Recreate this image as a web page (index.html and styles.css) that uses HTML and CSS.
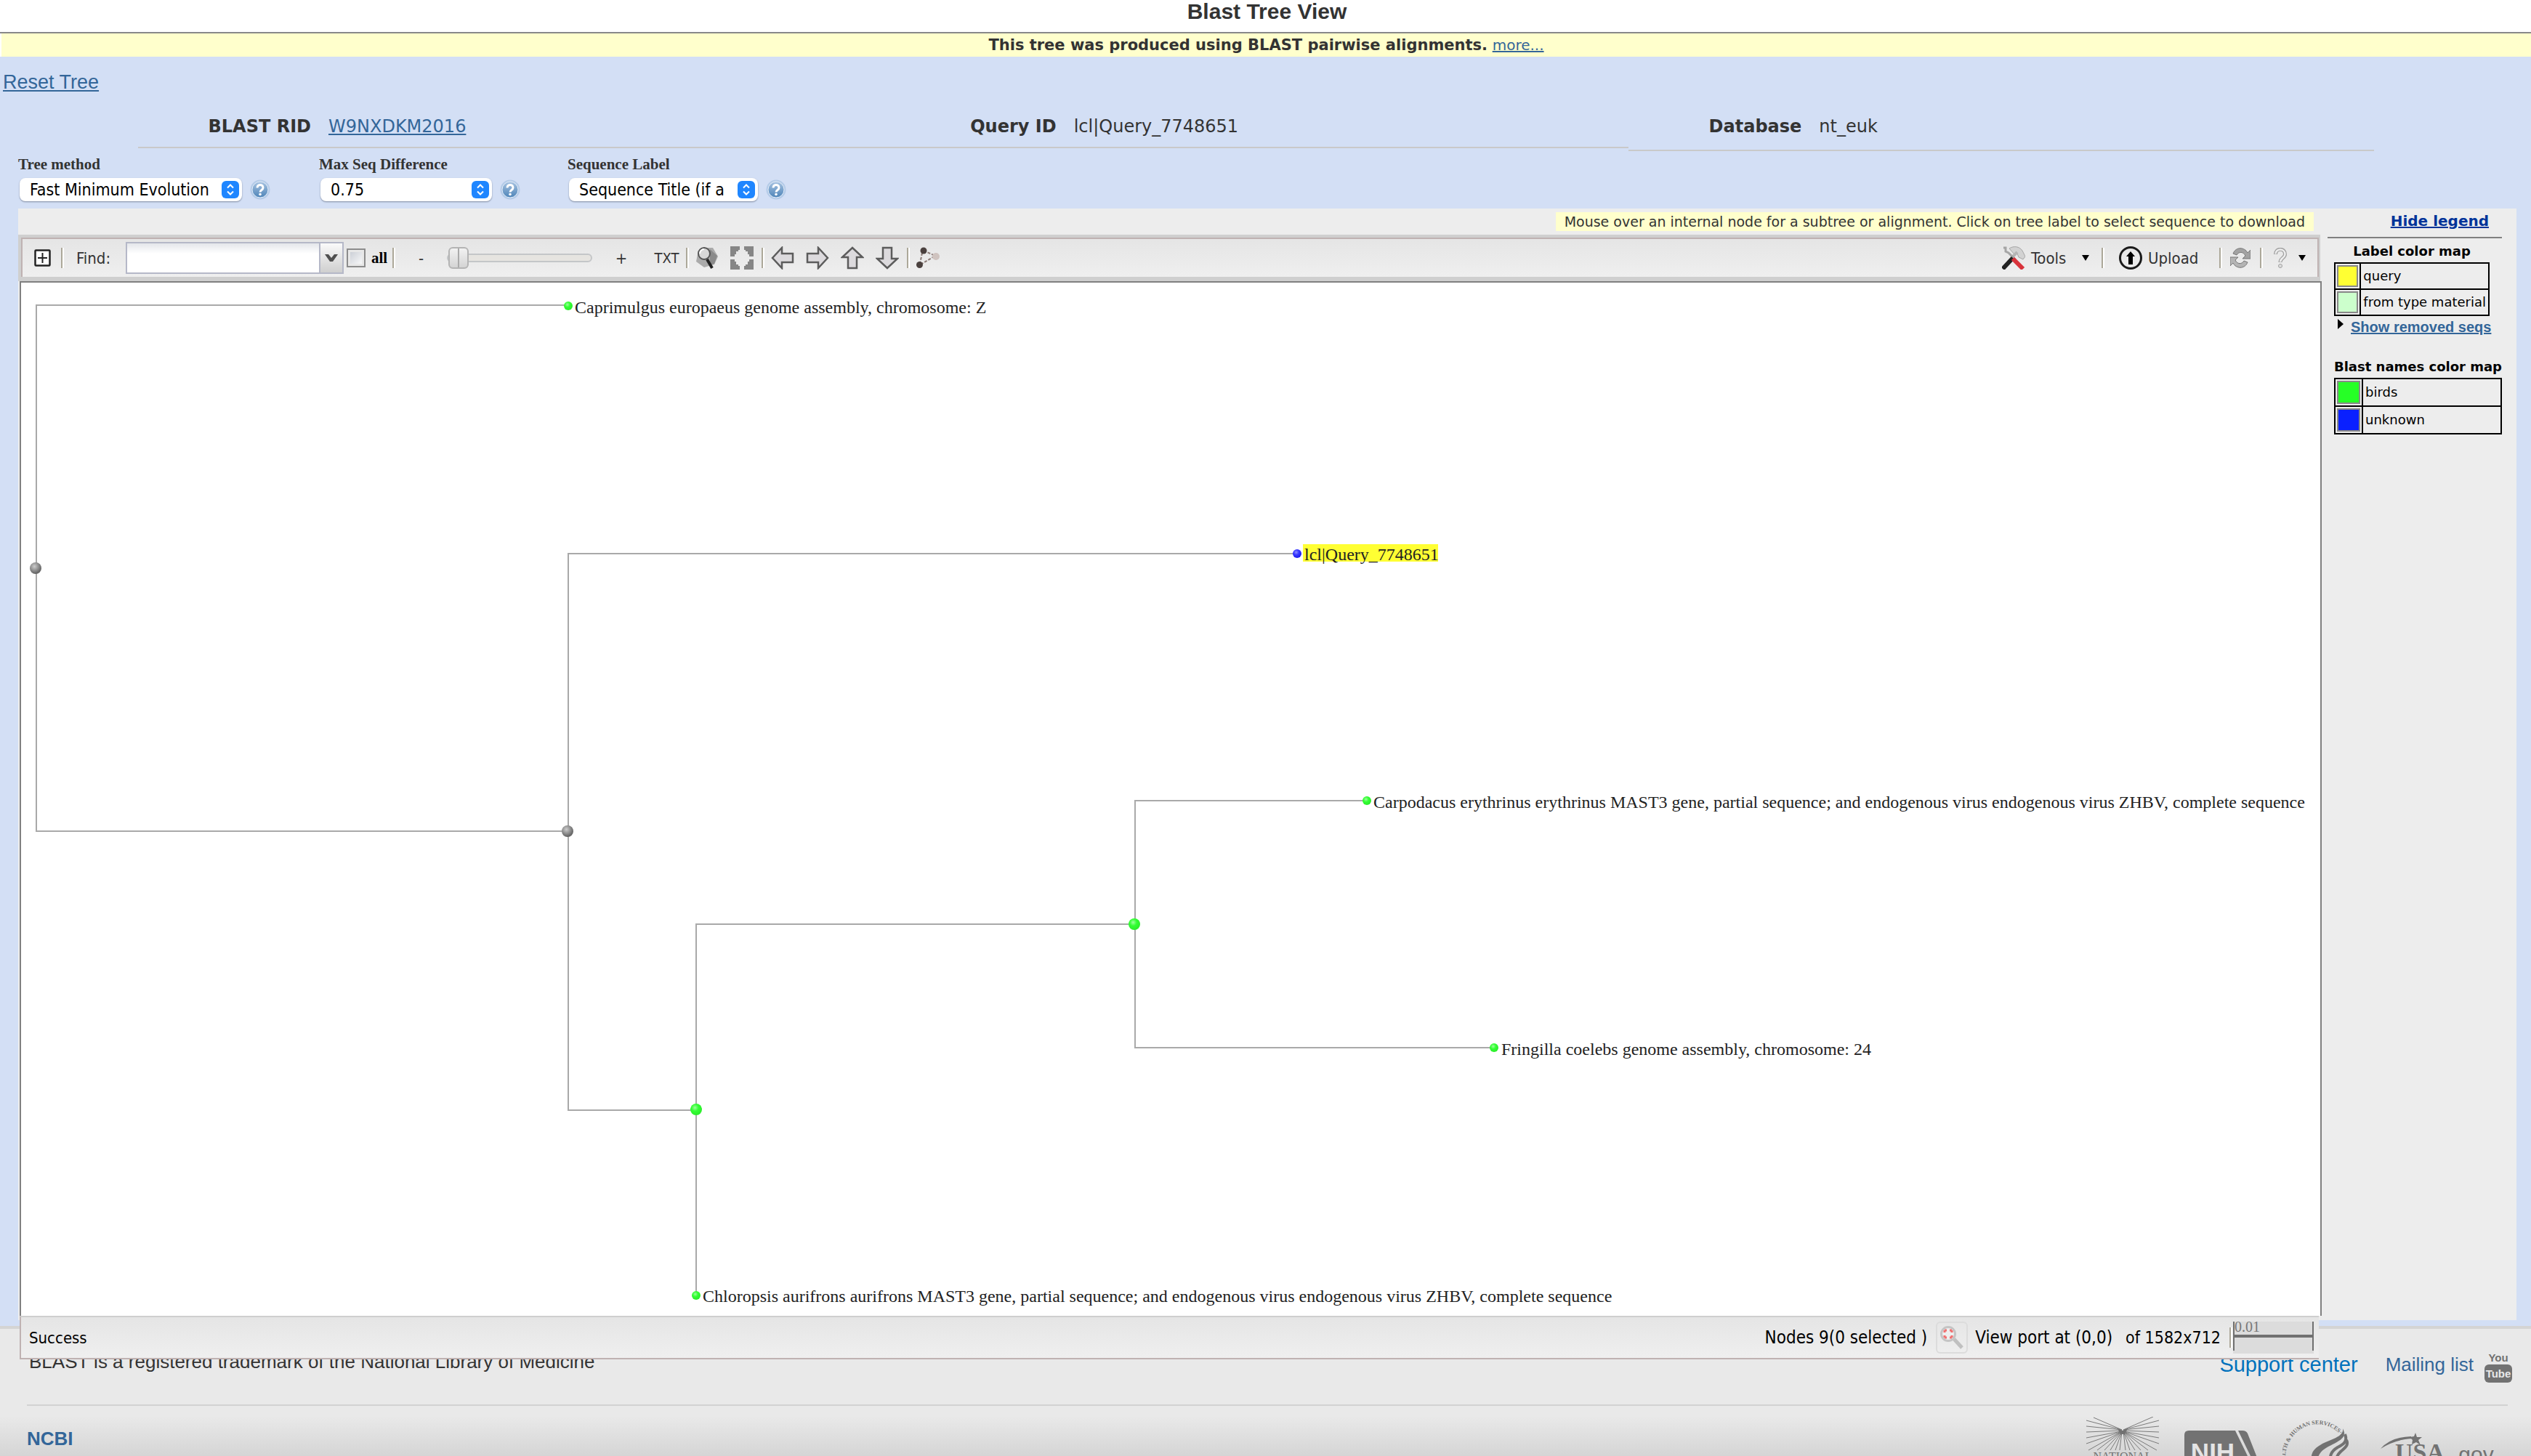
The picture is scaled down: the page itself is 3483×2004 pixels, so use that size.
FILE: index.html
```html
<!DOCTYPE html>
<html lang="en">
<head>
<meta charset="utf-8">
<title>Blast Tree View</title>
<link rel="stylesheet" href="styles.css">
</head>
<body>
<header class="title-bar"><h1>Blast Tree View</h1></header>
<p class="notice"><strong>This tree was produced using BLAST pairwise alignments.</strong> <a href="#more">more...</a></p>

<main class="viewer">
  <a class="reset" href="#reset">Reset Tree</a>

  <dl class="params">
    <div class="param"><dt>BLAST RID</dt><dd><a href="#rid">W9NXDKM2016</a></dd></div>
    <div class="param"><dt>Query ID</dt><dd>lcl|Query_7748651</dd></div>
    <div class="param param-last"><dt>Database</dt><dd>nt_euk</dd></div>
  </dl>

  <form class="controls">
    <div class="control control-method">
      <label for="method">Tree method</label>
      <div class="control-row">
        <span class="picker"><select id="method"><option>Fast Minimum Evolution</option><option>Neighbor Joining</option></select>
          <svg class="picker-arrows" viewBox="0 0 24 24"><rect width="24" height="24" rx="6"/><path d="M8 9.500l4-4 4 4M8 14.500l4 4 4-4"/></svg></span>
        <button type="button" class="help" aria-label="Help"><svg viewBox="0 0 28 28"><use href="#i-help"/></svg></button>
      </div>
    </div>
    <div class="control control-diff">
      <label for="diff">Max Seq Difference</label>
      <div class="control-row">
        <span class="picker"><select id="diff"><option>0.75</option><option>0.85</option></select>
          <svg class="picker-arrows" viewBox="0 0 24 24"><rect width="24" height="24" rx="6"/><path d="M8 9.500l4-4 4 4M8 14.500l4 4 4-4"/></svg></span>
        <button type="button" class="help" aria-label="Help"><svg viewBox="0 0 28 28"><use href="#i-help"/></svg></button>
      </div>
    </div>
    <div class="control control-label">
      <label for="seqlabel">Sequence Label</label>
      <div class="control-row">
        <span class="picker"><select id="seqlabel"><option>Sequence Title (if a</option><option>Taxonomic Name</option></select>
          <svg class="picker-arrows" viewBox="0 0 24 24"><rect width="24" height="24" rx="6"/><path d="M8 9.500l4-4 4 4M8 14.500l4 4 4-4"/></svg></span>
        <button type="button" class="help" aria-label="Help"><svg viewBox="0 0 28 28"><use href="#i-help"/></svg></button>
      </div>
    </div>
  </form>

  <div class="panel">
    <section class="workspace">
      <div class="hint-row"><p class="hint">Mouse over an internal node for a subtree or alignment. Click on tree label to select sequence to download</p></div>

      <div class="toolbar-frame">
      <div class="toolbar">
        <button type="button" class="tool-expand" aria-label="Expand"><svg width="24" height="24" viewBox="0 0 24 24"><rect x="1.500" y="1.500" width="20" height="21" rx="1" fill="#fff" stroke="#222" stroke-width="2.500"/><path d="M11.500 5v14M5 12h13" stroke="#222" stroke-width="2"/></svg></button>
        <span class="sep"></span>
        <label class="find-label" for="find">Find:</label>
        <input class="find" id="find" type="text">
        <button type="button" class="find-trigger" aria-label="Show matches"><svg width="18" height="14" viewBox="0 0 18 14"><path d="M0 2h5l4 5 4-5h5l-7 10h-4z" fill="#505050"/></svg></button>
        <input class="all-box" id="all" type="checkbox">
        <label class="all-label" for="all">all</label>
        <span class="sep"></span>
        <button type="button" class="zoom-out">-</button>
        <input class="zoom" type="range" min="0" max="100" value="0" aria-label="Zoom">
        <button type="button" class="zoom-in">+</button>
        <button type="button" class="txt">TXT</button>
        <span class="sep"></span>
        <div class="group">
          <button type="button" aria-label="Zoom to selection"><svg class="icon" viewBox="0 0 32 32"><path d="M8 2h16l7 12-5 11-14 4L1 21l2-10z" fill="#aaa"/><path d="M20 4l10 9-4 11-6 2z" fill="#8a8a8a"/><circle cx="12" cy="10" r="8" fill="#d8d8d8" stroke="#555" stroke-width="2"/><path d="M6 10a6 6 0 0 1 6-6" stroke="#fff" stroke-width="2" fill="none"/><path d="M16 18l7 12" stroke="#222" stroke-width="4"/></svg></button>
          <button type="button" aria-label="Fit to view"><svg class="icon" viewBox="0 0 32 32"><path d="M0 0h13v5h-2v2H8v4H6v3H0zM19 0h13v14h-6v-3h-2V7h-3V5h-2zM0 18h6v3h2v4h3v2h2v5H0zM32 18v14H19v-5h2v-2h3v-4h2v-3z" fill="#868686"/></svg></button>
        </div>
        <span class="sep"></span>
        <div class="group">
          <button type="button" aria-label="Pan left"><svg class="icon" viewBox="0 0 32 32"><use href="#i-arrow"/></svg></button>
          <button type="button" aria-label="Pan right"><svg class="icon" viewBox="0 0 32 32"><use href="#i-arrow" transform="rotate(180 16 16)"/></svg></button>
          <button type="button" aria-label="Pan up"><svg class="icon" viewBox="0 0 32 32"><use href="#i-arrow" transform="rotate(90 16 16)"/></svg></button>
          <button type="button" aria-label="Pan down"><svg class="icon" viewBox="0 0 32 32"><use href="#i-arrow" transform="rotate(-90 16 16)"/></svg></button>
        </div>
        <span class="sep"></span>
        <div class="group">
          <button type="button" aria-label="Layout"><svg class="icon" viewBox="0 0 32 32"><path d="M10 6l16 7M8 9L5 24M6 25l20-12" stroke="#8a7a76" stroke-width="2" stroke-dasharray="4 2" fill="none"/><circle cx="10" cy="6" r="4.500" fill="#4a403e"/><circle cx="4.500" cy="25.500" r="4.500" fill="#4a403e"/><circle cx="27" cy="14" r="5" fill="#cfc3bf"/></svg></button>
        </div>

        <button type="button" class="tool-menu"><svg class="icon" viewBox="0 0 32 32"><path d="M10 3c6-4 14-3 18 3l4 8-3 4-6-3-2-5-4 1z" fill="#d2d2d2" stroke="#a5a5a5"/><path d="M14 15l7-7" stroke="#b5b5b5" stroke-width="4"/><path d="M2 2l3 0 0 5 4 2 9 9" stroke="#a5a5a5" stroke-width="3" fill="none"/><path d="M1 31l14-15" stroke="#222" stroke-width="6"/><path d="M15 17l14 14" stroke="#d8333b" stroke-width="6"/></svg><span class="menu-text">Tools</span><svg class="caret" viewBox="0 0 10 8"><path d="M0 0h10L5 8z"/></svg></button>
        <span class="sep"></span>
        <button type="button" class="upload"><svg class="icon" viewBox="0 0 32 32"><circle cx="16" cy="16" r="14.500" fill="none" stroke="#1a1a1a" stroke-width="3"/><path d="M16 7l6 7h-3v11h-6V14h-3z" fill="#000"/></svg>Upload</button>
        <span class="sep"></span>
        <button type="button" class="refresh" aria-label="Refresh"><svg width="28" height="28" viewBox="0 0 28 28"><path d="M4 8C8-2 20-1 24 7l4-4v12H17l4-4c-3-6-9-6-12-1z" fill="#a2a2a2" stroke="#777"/><path d="M24 20c-4 10-16 9-20 1l-4 4V13h11l-4 4c3 6 9 6 12 1z" fill="#b4b4b4" stroke="#777"/></svg></button>
        <span class="sep"></span>
        <button type="button" class="tool-help" aria-label="Help menu"><svg width="18" height="28" viewBox="0 0 18 28"><path d="M2.500 9c0-9 13-9 13 0 0 5-6.500 5-6.500 11" fill="none" stroke="#a0a0a0" stroke-width="5"/><path d="M2.500 8.500c0-8 13-8 13 0.500 0 5-6.500 5-6.500 10.500" fill="none" stroke="#eee" stroke-width="2.500"/><circle cx="9" cy="25" r="2.500" fill="#ddd" stroke="#a0a0a0"/></svg><svg class="caret" viewBox="0 0 10 8"><path d="M0 0h10L5 8z"/></svg></button>
      </div>
      </div>

      <div class="canvas">
        <svg class="tree" role="img" aria-label="Phylogenetic tree">
          <g class="edges">
            <path d="M753 31H21V755H753"/>
            <path d="M1756 373H753V1139H929"/>
            <path d="M1533 883H929V1394"/>
            <path d="M1852 713H1533V1053H2027"/>
          </g>
          <circle cx="20" cy="393" r="8" fill="url(#ball-gray)"/>
          <circle cx="752" cy="755" r="8" fill="url(#ball-gray)"/>
          <circle cx="929" cy="1138" r="8" fill="url(#ball-green)"/>
          <circle cx="1532" cy="883" r="8" fill="url(#ball-green)"/>
          <circle cx="753" cy="32" r="6" fill="url(#ball-green)"/>
          <circle cx="1756" cy="373" r="6" fill="url(#ball-blue)"/>
          <circle cx="1852" cy="713" r="6" fill="url(#ball-green)"/>
          <circle cx="2027" cy="1053" r="6" fill="url(#ball-green)"/>
          <circle cx="929" cy="1394" r="6" fill="url(#ball-green)"/>
          <rect x="1764" y="360" width="186" height="24" fill="#ffff33"/>
          <text x="762" y="42">Caprimulgus europaeus genome assembly, chromosome: Z</text>
          <text x="1766" y="382">lcl|Query_7748651</text>
          <text x="1861" y="723">Carpodacus erythrinus erythrinus MAST3 gene, partial sequence; and endogenous virus endogenous virus ZHBV, complete sequence</text>
          <text x="2037" y="1063">Fringilla coelebs genome assembly, chromosome: 24</text>
          <text x="938" y="1403">Chloropsis aurifrons aurifrons MAST3 gene, partial sequence; and endogenous virus endogenous virus ZHBV, complete sequence</text>
        </svg>
      </div>

      <div class="status">
        <span>Success</span>
        <span class="status-nodes">Nodes 9(0 selected )</span>
        <button type="button" class="status-zoom" aria-label="Zoom to selected"><svg width="34" height="34" viewBox="0 0 34 34"><path d="M20 19l11 12" stroke="#c0c0c0" stroke-width="5"/><circle cx="12" cy="12" r="9.500" fill="#eee" stroke="#c4c4c4" stroke-width="3"/><path d="M7 7h3M14 7h3M7 17h3M14 17h3M7 7v3M17 7v3M7 14v3M17 14v3" stroke="#f07070" stroke-width="3"/></svg></button>
        <span class="status-port">View port at (0,0)</span>
        <span class="status-size">of 1582x712</span>
        <span class="sep"></span>
        <span class="scale"><span class="scale-value">0.01</span><span class="scale-bar"></span></span>
      </div>
    </section>

    <aside class="legend">
      <a class="legend-toggle" href="#legend">Hide legend</a>
      <hr>
      <h2>Label color map</h2>
      <table class="map map-label">
        <tr><td class="swatch-cell"><span class="swatch swatch-query"></span></td><td>query</td></tr>
        <tr><td class="swatch-cell"><span class="swatch swatch-type"></span></td><td>from type material</td></tr>
      </table>
      <p class="removed"><svg width="8" height="14" viewBox="0 0 8 14"><path d="M0 0l8 7-8 7z"/></svg><a href="#removed">Show removed seqs</a></p>
      <h2 class="names-title">Blast names color map</h2>
      <table class="map map-names">
        <tr><td class="swatch-cell"><span class="swatch swatch-birds"></span></td><td>birds</td></tr>
        <tr><td class="swatch-cell"><span class="swatch swatch-unknown"></span></td><td>unknown</td></tr>
      </table>
    </aside>
  </div>
</main>

<footer class="footer">
  <div class="footer-top">
    <p>BLAST is a registered trademark of the National Library of Medicine</p>
    <nav>
      <a class="support" href="#support">Support center</a>
      <a class="mailing" href="#mailing">Mailing list</a>
      <a class="youtube" href="#youtube" aria-label="YouTube"><svg width="38" height="46" viewBox="0 0 38 46"><text class="yt" x="19" y="16" fill="#727272">You</text><rect y="20" width="38" height="25" rx="6" fill="#727272"/><text class="yt" x="19" y="38" fill="#e9e9e9">Tube</text></svg></a>
    </nav>
  </div>
  <div class="footer-bottom">
    <a class="ncbi" href="#ncbi">NCBI</a>
    <div class="logos">
      <svg class="logo-nlm" width="100" height="64" viewBox="0 0 100 64"><path d="M49 18L0 5M49 18L10 1M49 18L0 13M49 19L0 21M49 20L0 29M49 20L0 37M49 20L3 46M49 20L15 46M49 20L25 46M49 20L33 46M49 20L40 46M49 20L46 46M51 18L100 5M51 18L92 0M51 18L100 13M51 19L100 21M51 20L100 29M51 20L100 37M51 20L97 46M51 20L85 46M51 20L75 46M51 20L67 46M51 20L60 46M51 20L54 46" stroke="#7a7a7a" fill="none"/><path d="M43 16l7 3 7-3-4 8h-6z" fill="#727272"/><text x="50" y="60" text-anchor="middle">NATIONAL</text></svg>
      <svg class="logo-nih" width="100" height="64" viewBox="0 0 100 64"><path d="M6 19h64l18 37H0V25q0-6 6-6zM74 19h6q5 0 7 4l13 33-2 8h-8l2-8z" fill="#727272"/><text x="39" y="61" text-anchor="middle">NIH</text></svg>
      <svg class="logo-hhs" width="92" height="64" viewBox="0 0 92 64"><path id="hhs-arc" d="M12 83A40 42 0 1 1 84 30" fill="none"/><text><textPath href="#hhs-arc" startOffset="14">HEALTH &amp; HUMAN SERVICES·USA</textPath></text><path d="M83 16c6 12-3 16-14 22-12 6-20 10-22 26h-8c0-16 4-20 16-27 12-6 30-10 28-21z" fill="#727272"/><path d="M86 24c4 10-2 14-10 18-10 6-11 12-10 22M88 32c4 8-4 12-8 16-6 6-6 8-4 16" fill="none" stroke="#727272" stroke-width="4"/></svg>
      <svg class="logo-usa" width="158" height="64" viewBox="0 0 158 64"><path d="M0 44Q14 28 42 27v3Q18 32 0 44zM48 22l2 6 7 0-5 4 3 7-6-4-6 3 1-6-4-4 6-1z" fill="#727272"/><text class="usa" x="20" y="60">USA</text><text class="gov" x="99" y="62">.gov</text></svg>
    </div>
  </div>
</footer>

<svg class="defs" width="0" height="0" aria-hidden="true">
  <defs>
    <linearGradient id="help-fill" x1="0" y1="0" x2="0" y2="1"><stop offset="0" stop-color="#a9c4e2"/><stop offset="1" stop-color="#4d84b8"/></linearGradient>
    <radialGradient id="ball-gray" cx="0.4" cy="0.35" r="0.6"><stop offset="0" stop-color="#ccc"/><stop offset="1" stop-color="#666"/></radialGradient>
    <radialGradient id="ball-green" cx="0.4" cy="0.35" r="0.6"><stop offset="0" stop-color="#9dff9d"/><stop offset="0.5" stop-color="#33ff33"/><stop offset="1" stop-color="#2cee2c"/></radialGradient>
    <radialGradient id="ball-blue" cx="0.4" cy="0.35" r="0.6"><stop offset="0" stop-color="#9090ff"/><stop offset="0.5" stop-color="#3838ff"/><stop offset="1" stop-color="#2020f0"/></radialGradient>
    <g id="i-help"><circle cx="14" cy="14" r="13.500" fill="#b4cbe8"/><circle cx="14" cy="14" r="11" fill="url(#help-fill)" stroke="#e4edf8"/><path d="M10 11.500c0-5.500 8-5.500 8 0 0 3-4 3-4 6" fill="none" stroke="#fff" stroke-width="3"/><circle cx="14" cy="20.500" r="1.800" fill="#fff"/></g>
    <path id="i-arrow" d="M2 16L15 2v8h15v12H15v8z" fill="#dcdadd" stroke="#5c5c5c" stroke-width="2.500"/>
  </defs>
</svg>
</body>
</html>
```
FILE: styles.css
```css
* { box-sizing: border-box; }

body {
  margin: 0;
  height: 100vh;
  display: flex;
  flex-direction: column;
  overflow: hidden;
  background: #fff;
  color: #333;
  font-family: "DejaVu Sans", Verdana, sans-serif;
}

h1, h2, p, dl, dd { margin: 0; }
a { color: #336699; }

button {
  margin: 0;
  padding: 0;
  border: 0;
  background: none;
  color: #333;
  font: 22px "DejaVu Sans Condensed", "DejaVu Sans", sans-serif;
  font-stretch: condensed;
  display: flex;
  align-items: center;
}

svg { display: block; flex: none; }
.defs { position: absolute; }

.title-bar {
  height: 46px;
  padding-left: 4px;
  border-bottom: 2px solid #888;
  text-align: center;
}
.title-bar h1 { font: bold 30px/32px "Liberation Sans", Arial, sans-serif; }

.notice {
  margin-left: 2px;
  background: #ffffcc;
  text-align: center;
  font-size: 21px;
  line-height: 32px;
}
.notice a { font-size: 20px; }

.viewer {
  flex: 1;
  min-height: 0;
  display: flex;
  flex-direction: column;
  padding: 21px 20px 8px 25px;
  background: #d3dff5;
}

.reset {
  align-self: flex-start;
  margin-left: -21px;
  font: 27px/28px "Liberation Sans", Arial, sans-serif;
}

.params {
  display: grid;
  grid-template-columns: repeat(3, 1fr);
  align-items: start;
  margin-top: 33px;
  padding: 0 196px 0 165px;
  font-size: 24px;
  line-height: 28px;
}
.param {
  display: flex;
  gap: 24px;
  padding-bottom: 14px;
  border-bottom: 2px solid #c9c9c9;
}
.param-last { padding-bottom: 18px; }
.param dt { width: 238px; text-align: right; font-weight: bold; }

.controls { display: flex; margin: 6px 0 10px; }
.control label {
  display: block;
  font: bold 21px/24px "Liberation Serif", "Times New Roman", serif;
}
.control-method { width: 414px; }
.control-diff { width: 342px; }
.control-row {
  display: flex;
  align-items: center;
  gap: 11px;
  height: 32px;
  margin: 7px 0 0 2px;
}
.picker { position: relative; }
.picker select {
  display: block;
  appearance: none;
  height: 32px;
  padding: 0 30px 0 14px;
  border: 0;
  border-radius: 8px;
  background: #fff;
  box-shadow: 0 1px 2px #7f8aa0;
  color: #000;
  font: 23px "DejaVu Sans Condensed", "DejaVu Sans", sans-serif;
  font-stretch: condensed;
}
.control-method select { width: 306px; }
.control-diff select { width: 236px; }
.control-label select { width: 260px; }
.picker-arrows {
  position: absolute;
  top: 4px;
  right: 4px;
  width: 24px;
  height: 24px;
  pointer-events: none;
}
.picker-arrows rect { fill: #1f86ff; }
.picker-arrows path { fill: none; stroke: #fff; stroke-width: 2; }
.help svg { width: 28px; height: 28px; }

.panel {
  flex: 1;
  min-height: 0;
  display: flex;
  background: #ededed;
}
.workspace {
  flex: 1;
  min-width: 0;
  display: flex;
  flex-direction: column;
}

.hint-row {
  display: flex;
  justify-content: flex-end;
  padding: 5px 11px;
}
.hint {
  padding: 0 12px;
  background: #ffffcc;
  font-size: 19px;
  line-height: 26px;
}

.toolbar-frame {
  margin-right: 2px;
  padding: 4px 2px 6px 4px;
  background: #cfcfcf;
}
.toolbar {
  height: 54px;
  display: flex;
  align-items: center;
  padding: 0 0 0 16px;
  border: 2px solid #bfb2b2;
  border-bottom: 0;
  background: linear-gradient(#e5e5e5, #efefef);
  font: 22px "DejaVu Sans Condensed", "DejaVu Sans", sans-serif;
  font-stretch: condensed;
}
.sep {
  flex: none;
  width: 4px;
  height: 28px;
  border-left: 2px solid #aca899;
  border-right: 2px solid #fff;
}
.icon { width: 32px; height: 32px; }
.caret { width: 10px; height: 8px; fill: #000; }

.tool-expand { width: 37px; }
.find-label { width: 85px; padding-left: 17px; }
.find {
  width: 266px;
  height: 44px;
  border: 2px solid #b5b8c8;
  border-right: 0;
  background: linear-gradient(#e4e6ea, #fff 14px);
  font: inherit;
}
.find-trigger {
  width: 34px;
  height: 44px;
  justify-content: center;
  border: 2px solid #b5b8c8;
  background: linear-gradient(#fafafa, #cfcfcf);
}
.all-box {
  appearance: none;
  width: 26px;
  height: 26px;
  margin: 0 0 0 4px;
  border: 2px solid #8c8c8c;
  background: linear-gradient(135deg, #c4c8d0, #fff);
  box-shadow: inset 0 0 0 3px #e8e8e8;
}
.all-label {
  width: 37px;
  padding-left: 8px;
  color: #000;
  font: bold 21px "Liberation Serif", "Times New Roman", serif;
}
.zoom-out, .zoom-in, .txt { justify-content: center; }
.zoom-out { width: 71px; }
.zoom-in { width: 80px; }
.txt { width: 49px; padding-right: 4px; font-size: 20px; }
.zoom {
  appearance: none;
  width: 200px;
  height: 30px;
  margin: 0;
  background: none;
}
.zoom::-webkit-slider-runnable-track {
  height: 12px;
  border: 2px solid #c4c6c8;
  border-radius: 6px;
  background: #e6e4e0;
}
.zoom::-webkit-slider-thumb {
  appearance: none;
  width: 28px;
  height: 30px;
  margin-top: -11px;
  border: 2px solid #b4b4b4;
  border-radius: 6px;
  background: linear-gradient(90deg, transparent 11px, #aaa 11px, #aaa 13px, transparent 13px), linear-gradient(#f2f2f2, #d4d4d4);
}
.group { display: flex; gap: 16px; padding: 0 11px 0 9px; }

.tool-menu { width: 137px; margin-left: auto; gap: 8px; }
.menu-text { width: 62px; text-align: left; }
.upload { width: 158px; padding-left: 20px; gap: 8px; }
.refresh { width: 52px; padding-left: 11px; }
.tool-help { width: 75px; padding-left: 15px; gap: 16px; }

.canvas {
  flex: 1;
  min-height: 0;
  margin-left: 2px;
  border: 2px solid #808080;
  border-bottom: 0;
  background: #fff;
}
.tree { width: 100%; height: 100%; }
.edges path { fill: none; stroke: #a9a9a9; stroke-width: 2; }
.tree text { fill: #222; font: 24px "Liberation Serif", "Times New Roman", serif; }

.status {
  position: relative;
  flex: none;
  height: 60px;
  margin: 0 4px -54px 2px;
  display: flex;
  align-items: center;
  padding: 0 7px 0 11px;
  border: solid #bfb2b2;
  border-width: 2px 0 2px 2px;
  border-top-color: #cfcfcf;
  background: linear-gradient(#e5e5e5, #efefef);
  color: #000;
  font: 22px "DejaVu Sans Condensed", "DejaVu Sans", sans-serif;
  font-stretch: condensed;
  white-space: nowrap;
}
.status-nodes { margin-left: auto; }
.status-nodes, .status-port { font-size: 24px; }
.status-zoom {
  width: 44px;
  height: 44px;
  margin: 0 10px 0 12px;
  justify-content: center;
  border: 2px solid #dcdcdc;
  border-radius: 6px;
}
.status-size { margin: 0 12px 0 18px; font-size: 23px; }
.scale {
  width: 111px;
  height: 44px;
  margin-left: 1px;
  background: #dcdcdc;
}
.scale-value {
  display: block;
  height: 18px;
  border: solid #707070;
  border-width: 0 2px;
  color: #777;
  font: 20px/14px "Liberation Serif", "Times New Roman", serif;
}
.scale-bar {
  display: block;
  height: 22px;
  border: solid #707070;
  border-width: 4px 2px 0;
}

.legend {
  width: 268px;
  padding: 5px 20px 0 8px;
  color: #000;
}
.legend-toggle {
  display: block;
  padding-right: 18px;
  text-align: right;
  color: #003399;
  font-size: 20px;
  font-weight: bold;
  line-height: 24px;
}
.legend hr {
  height: 2px;
  margin: 10px 0 7px;
  border: 0;
  background: #808080;
}
.legend h2 {
  margin-bottom: 4px;
  padding-right: 8px;
  text-align: center;
  font-size: 18px;
  line-height: 22px;
}
.legend .names-title { padding: 0; text-align: right; white-space: nowrap; }
.map {
  margin-left: 9px;
  border-collapse: collapse;
  font-size: 18px;
  line-height: 22px;
}
.map td { padding: 0 3px; border: 2px solid #000; white-space: nowrap; }
.map .swatch-cell { padding: 2px; }
.map-label { width: 214px; }
.map-label .swatch-cell { width: 36px; }
.map-names { width: 231px; }
.map-names .swatch-cell { width: 38px; }
.swatch { display: block; height: 30px; border: 2px solid #888; }
.map-names .swatch { height: 32px; }
.swatch-query { background: #ffff33; }
.swatch-type { background: #ccffcc; }
.swatch-birds { background: #26ff26; }
.swatch-unknown { background: #0a20ff; }
.removed {
  display: flex;
  gap: 10px;
  margin: 4px 0 33px 14px;
  font: bold 20px/22px "Liberation Sans", Arial, sans-serif;
  white-space: nowrap;
}

.footer {
  flex: none;
  height: 179px;
  overflow: hidden;
  padding: 0 32px 0 37px;
  border-top: 4px solid #d4d4d4;
  background: linear-gradient(#e9e9e9 120px, #d5d5d5);
  font-family: "Liberation Sans", Arial, sans-serif;
  font-size: 26px;
  line-height: 30px;
}
.footer a { text-decoration: none; }
.footer-top {
  display: flex;
  justify-content: space-between;
  height: 106px;
  padding: 30px 0 0 3px;
  border-bottom: 2px solid #d2d2d2;
}
.footer-top nav { display: flex; margin-right: -6px; padding-top: 4px; }
.footer-top .support { margin-right: 38px; color: #0071bc; font-size: 29px; }
.mailing { margin-right: 15px; }
.youtube { margin-top: -5px; }
.yt { font: bold 15px "Liberation Sans", Arial, sans-serif; text-anchor: middle; }
.footer-bottom { display: flex; justify-content: space-between; }
.ncbi { padding-top: 30px; font-weight: bold; }
.logos { display: flex; gap: 35px; padding: 15px 17px 0 0; }
.logos text { fill: #727272; font: 16px "Liberation Serif", serif; }
.logos .logo-nih text { fill: #e4e4e4; font: bold 35px "Liberation Sans", sans-serif; }
.logos .logo-hhs text { font: bold 8px "Liberation Serif", serif; }
.logo-usa { margin-left: 8px; }
.logos .usa { font: bold 34px "Liberation Serif", serif; }
.logos .gov { font: 30px "Liberation Sans", sans-serif; }
```
